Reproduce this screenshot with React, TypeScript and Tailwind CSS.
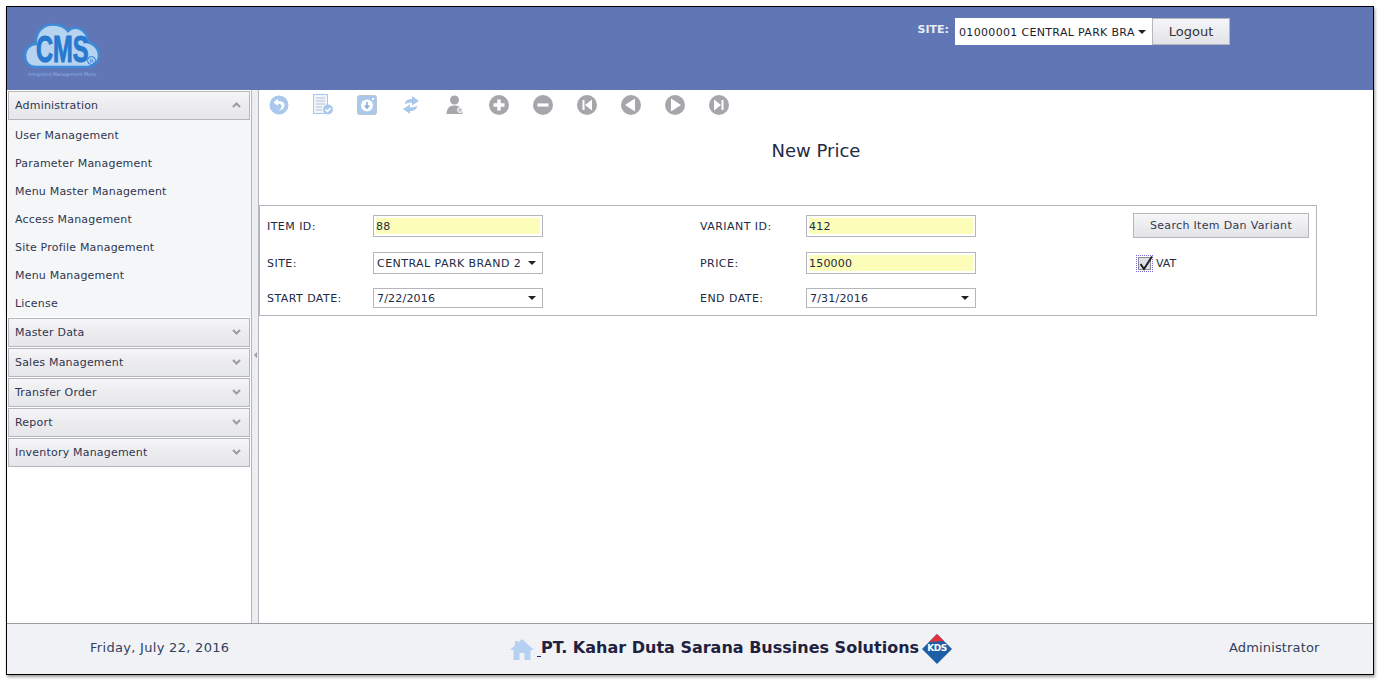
import { ReactNode } from "react";

const font = { fontFamily: '"DejaVu Sans", Verdana, sans-serif' };
const blue = "#a9c8ec";
const gray = "#a5a7ab";

const menuItems = [
  "User Management",
  "Parameter Management",
  "Menu Master Management",
  "Access Management",
  "Site Profile Management",
  "Menu Management",
  "License",
];

const closedGroups = ["Master Data", "Sales Management", "Transfer Order", "Report", "Inventory Management"];

function Chevron({ up }: { up?: boolean }) {
  return (
    <svg width="9" height="6" viewBox="0 0 9 6" className="-mt-[2px]">
      <path d={up ? "M1 5 L4.5 1.5 L8 5" : "M1 1 L4.5 4.5 L8 1"} fill="none" stroke="#9a9ca3" strokeWidth="2" />
    </svg>
  );
}

function GroupHeader({ label, up }: { label: string; up?: boolean }) {
  return (
    <div className="h-[29px] mx-[1px] flex items-center justify-between pl-[6px] pr-[8px] border border-[#b4b6bc] bg-gradient-to-b from-[#f6f6f8] via-[#ececef] to-[#e6e7ea] text-[11px] tracking-[0.2px] text-[#2f3650]">
      <span className="pt-[2px]">{label}</span>
      <Chevron up={up} />
    </div>
  );
}

function Circle({ children }: { children: ReactNode }) {
  return (
    <svg width="20" height="20" viewBox="0 0 20 20">
      <circle cx="10" cy="10" r="10" fill={gray} />
      {children}
    </svg>
  );
}

const toolIcons = [
  <svg key="undo" width="20" height="20" viewBox="0 0 20 20">
    <circle cx="10" cy="10" r="9.5" fill={blue} />
    <path d="M9 3.5 L4.5 7.5 L9 11 V8.8 C11.5 8.6 13 10 12.5 12 C12.2 13.6 11 14.8 9.5 15.5 C13 15.5 15.5 13 15.5 10 C15.5 7.5 13 6 9 6 Z" fill="#fff" />
  </svg>,
  <svg key="doc" width="22" height="22" viewBox="0 0 22 22">
    <rect x="1.5" y="0.5" width="14" height="19" fill="#eef4fb" stroke={blue} />
    <path d="M4 4 H13 M4 7 H13 M4 10 H13 M4 13 H10 M4 16 H10" stroke="#b9c3d0" strokeWidth="1" />
    <circle cx="16" cy="15.5" r="5" fill={blue} />
    <path d="M13.5 15.5 L15.5 17.5 L18.5 14" fill="none" stroke="#fff" strokeWidth="1.5" />
  </svg>,
  <svg key="save" width="20" height="20" viewBox="0 0 20 20">
    <rect x="0.5" y="0.5" width="19" height="19" rx="2" fill={blue} stroke="#bcc6d2" />
    <circle cx="10" cy="10.5" r="6" fill="#fff" />
    <path d="M10 7 V12 M7.8 10.5 L10 13 L12.2 10.5" fill="none" stroke="#86aedd" strokeWidth="1.6" />
    <rect x="15" y="3" width="2" height="2" fill="#fff" />
  </svg>,
  <svg key="sync" width="18" height="20" viewBox="0 0 18 20">
    <path d="M3 9 C3 5.5 6 4 10 4 V1 L17 6 L10 10.5 V7.5 C7 7.5 5 8.5 3 9 Z" fill={blue} />
    <path d="M15 11 C15 14.5 12 16 8 16 V19 L1 14 L8 9.5 V12.5 C11 12.5 13 11.5 15 11 Z" fill={blue} />
  </svg>,
  <svg key="user" width="20" height="20" viewBox="0 0 20 20">
    <circle cx="9.5" cy="5" r="4.5" fill={gray} />
    <path d="M1.5 19 C1.5 13 5 10.5 9.5 10.5 C14 10.5 17.5 13 17.5 19 Z" fill={gray} />
    <circle cx="15" cy="15" r="2.5" fill="#c5c6c9" stroke="#fff" />
  </svg>,
  <Circle key="plus">
    <path d="M10 4.5 V15.5 M4.5 10 H15.5" stroke="#fff" strokeWidth="3.4" />
  </Circle>,
  <Circle key="minus">
    <path d="M4.5 10 H15.5" stroke="#fff" strokeWidth="3.2" />
  </Circle>,
  <Circle key="first">
    <path d="M6.5 5 V15" stroke="#fff" strokeWidth="2" />
    <path d="M15 4.5 V15.5 L8 10 Z" fill="#fff" />
  </Circle>,
  <Circle key="prev">
    <path d="M14 3.5 V16.5 L4 10 Z" fill="#fff" />
  </Circle>,
  <Circle key="next">
    <path d="M6 3.5 V16.5 L16 10 Z" fill="#fff" />
  </Circle>,
  <Circle key="last">
    <path d="M13.5 5 V15" stroke="#fff" strokeWidth="2" />
    <path d="M5 4.5 V15.5 L12 10 Z" fill="#fff" />
  </Circle>,
];

function Field({ value, yellow }: { value: string; yellow?: boolean }) {
  return (
    <div className="w-[170px] h-[22px] border border-[#b4b6bc] bg-white p-[2px] shrink-0">
      <div className={`h-full flex items-center pt-[2px] tracking-[0.2px] ${yellow ? "bg-[#fbfdb9]" : ""}`}>{value}</div>
    </div>
  );
}

function Select({ value, h = "h-[22px]" }: { value: string; h?: string }) {
  return (
    <div className={`w-[170px] ${h} border border-[#b4b6bc] bg-white flex items-center justify-between pl-[3px] pr-[6px] shrink-0`}>
      <span className="pt-[2px]">{value}</span>
      <span className="w-0 h-0 border-x-[4px] border-x-transparent border-t-[4px] border-t-[#222]" />
    </div>
  );
}

function Label({ w, children }: { w: string; children: ReactNode }) {
  return <div className={`${w} shrink-0 pt-[2px] tracking-[0.45px]`}>{children}</div>;
}

function CmsLogo() {
  return (
    <div className="relative w-[80px] h-[60px]">
      <svg width="76" height="46" viewBox="0 0 76 46" className="absolute left-0 top-0">
        <path
          d="M12 44 C4 44 1 38 1 32 C1 26 6 21 12 21 C11 10 18 1.5 29 1.5 C36 1.5 41 4 44 8 C48 4 54 4 58 7 C62 10 64 15 63 19 C70 20 75 26 75 32 C75 39 70 44 62 44 Z"
          fill="#b6d3f0"
          stroke="#3d8ad8"
          strokeWidth="2.5"
        />
      </svg>
      <span
        className="absolute left-[12px] top-[11px] text-[37px] leading-[32px] font-bold text-[#2878cf] scale-x-[0.64] origin-left [-webkit-text-stroke:1px_#2878cf]"
        style={{ fontFamily: '"Liberation Sans", sans-serif' }}
      >
        CMS
      </span>
      <span className="absolute left-[63px] top-[33px] w-[9px] h-[9px] rounded-full border border-[#2878cf] text-[6px] leading-[7px] text-center text-[#2878cf]">R</span>
      <span className="absolute left-[4px] top-[48px] whitespace-nowrap text-[5px] leading-[6px] text-[#8fb2e6] scale-x-[0.9] origin-left">
        Integrated Management Menu
      </span>
    </div>
  );
}

export default function App() {
  return (
    <div className="w-[1380px] h-[681px] bg-white pt-[6px] pl-[6px] overflow-hidden text-[11px] text-[#222a45]" style={font}>
      <div className="w-[1368px] h-[669px] border border-black flex flex-col shadow-[1px_2px_3px_rgba(0,0,0,0.4)]">
        {/* header */}
        <div className="h-[83px] shrink-0 bg-[#6076b5] flex justify-between">
          <div className="pl-[17px] pt-[16px]">
            <CmsLogo />
          </div>
          <div className="flex mr-[143px] mt-[11px] h-[27px]">
            <span className="text-[11px] font-bold text-[#e8ecf6] mt-[4px] mr-[6px]">SITE:</span>
            <div className="w-[197px] h-[27px] bg-white flex items-center justify-between pl-[4px] pr-[6px] text-[#1c1c2e] tracking-[0.33px]">
              <span className="whitespace-nowrap pt-[3px]">01000001 CENTRAL PARK BRA</span>
              <span className="w-0 h-0 border-x-[4px] border-x-transparent border-t-[4px] border-t-[#222]" />
            </div>
            <div className="w-[78px] h-[27px] border border-[#b4b6bc] bg-gradient-to-b from-[#f6f6f8] to-[#e2e3e8] flex items-center justify-center text-[13px] text-[#333]">
              Logout
            </div>
          </div>
        </div>

        {/* body */}
        <div className="flex-1 flex min-h-0">
          <div className="w-[244px] shrink-0 bg-white pt-[1px] flex flex-col gap-[1px] border-r border-[#b4b6bc] box-content">
            <GroupHeader label="Administration" up />
            <div className="bg-[#f5f6f8] pl-[8px] -mt-[1px] pt-[1px]">
              {menuItems.map((m) => (
                <div key={m} className="h-[28px] flex items-center pt-[2px] text-[11px] tracking-[0.2px] text-[#2f3650]">
                  {m}
                </div>
              ))}
            </div>
            {closedGroups.map((g) => (
              <GroupHeader key={g} label={g} />
            ))}
          </div>
          <div className="w-[7px] shrink-0 bg-[#edeef2] border-r border-[#b4b6bc] flex items-center pl-[2px] pb-[3px]">
            <span className="w-0 h-0 border-y-[3px] border-y-transparent border-r-[3px] border-r-[#9a9ca3]" />
          </div>

          <div className="flex-1 bg-white min-w-0">
            <div className="flex items-center h-[30px] -ml-[2px]">
              {toolIcons.map((icon, i) => (
                <div key={i} className="w-[44px] h-[30px] flex items-center justify-center -mt-[1px]">
                  {icon}
                </div>
              ))}
            </div>
            <div className="text-center text-[18px] leading-[24px] mt-[19px] text-[#222a45]">New Price</div>

            <div className="w-[1058px] h-[111px] mt-[42px] border border-[#b4b6bc] pl-[7px] pt-[9px] relative">
              <div className="flex items-center h-[22px]">
                <Label w="w-[106px]">ITEM ID:</Label>
                <Field value="88" yellow />
                <Label w="w-[157px] ml-[157px] mr-[-51px]">VARIANT ID:</Label>
                <Field value="412" yellow />
              </div>
              <div className="flex items-center h-[22px] mt-[15px] tracking-[0.45px]">
                <Label w="w-[106px]">SITE:</Label>
                <Select value="CENTRAL PARK BRAND 2" />
                <Label w="w-[157px] ml-[157px] mr-[-51px]">PRICE:</Label>
                <Field value="150000" yellow />
              </div>
              <div className="flex items-center h-[20px] mt-[14px] tracking-[0.2px]">
                <Label w="w-[106px]">START DATE:</Label>
                <Select value="7/22/2016" h="h-[20px]" />
                <Label w="w-[157px] ml-[157px] mr-[-51px]">END DATE:</Label>
                <Select value="7/31/2016" h="h-[20px]" />
              </div>

              <div className="absolute left-[873px] top-[7px] w-[176px] h-[25px] border border-[#b4b6bc] bg-gradient-to-b from-[#f6f6f8] to-[#e2e3e8] flex items-center justify-center pt-[2px] tracking-[0.33px] text-[#333a50]">
                Search Item Dan Variant
              </div>
              <div className="absolute left-[876px] top-[49px] flex items-center gap-[3px]">
                <div className="w-[17px] h-[17px] border border-dotted border-[#7b68d8] p-[1px]">
                  <div className="relative w-full h-full border border-[#8a8c94] bg-[#dfe1e8]">
                    <svg width="16" height="16" viewBox="0 0 16 16" className="absolute left-[-1px] -top-[3px]">
                      <path d="M2.5 9 L6 14 L14 1.5" fill="none" stroke="#222" strokeWidth="2" />
                    </svg>
                  </div>
                </div>
                <span className="pt-[1px]">VAT</span>
              </div>
            </div>
          </div>
        </div>

        {/* footer */}
        <div className="h-[51px] shrink-0 bg-[#f1f2f5] border-t border-[#9c9ea4] flex items-center relative">
          <div className="absolute left-[83px] top-[14px] text-[13px] tracking-[0.3px] text-[#33405c]">Friday, July 22, 2016</div>
          <div className="ml-[503px] flex items-center">
            <svg width="24" height="24" viewBox="0 0 24 24">
              <path d="M12 2 L24 13 H20.5 V23 H14.5 V16 H9.5 V23 H3.5 V13 H0 L5 8.5 V4 H8 V5.8 Z" fill="#b5d0f0" />
            </svg>
            <span className="ml-[3px] w-[4px] h-[15px] border-b border-[#222a70]" />
            <span className="text-[16px] leading-[24px] -mt-[3px] font-bold text-[#1e2240] whitespace-nowrap">PT. Kahar Duta Sarana Bussines Solutions</span>
            <div className="relative w-[30px] h-[30px] ml-[3px]">
              <svg width="30" height="30" viewBox="0 0 30 30" className="absolute inset-0">
                <path d="M15 0 L30 15 L15 30 L0 15 Z" fill="#1f5fa8" />
                <path d="M15 0 L7 8 L22 7 Z" fill="#e0323c" />
              </svg>
              <span className="absolute inset-0 flex items-center justify-center text-[9px] font-bold text-white tracking-[-0.5px]">KDS</span>
            </div>
          </div>
          <div className="absolute left-[1222px] top-[14px] text-[13px] tracking-[0.15px] text-[#33405c]">Administrator</div>
        </div>
      </div>
    </div>
  );
}
